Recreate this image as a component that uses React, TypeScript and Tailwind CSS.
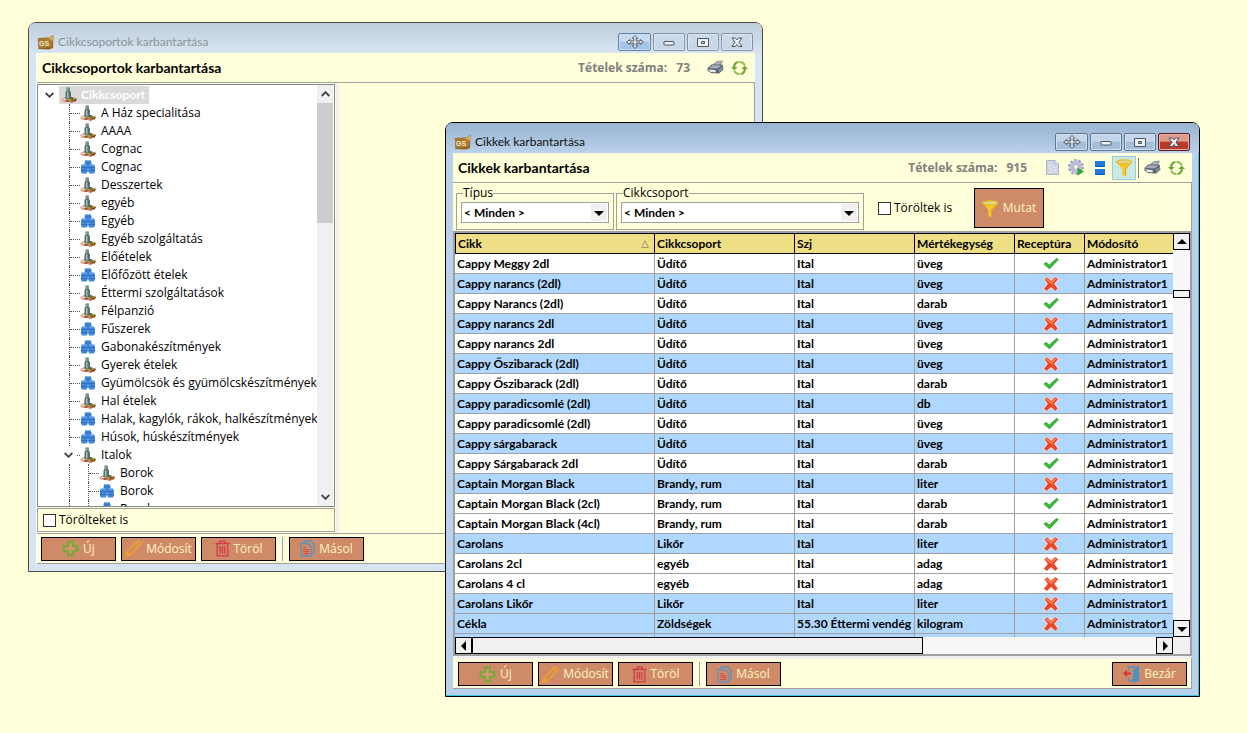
import React, { useState } from 'react'
import clsx from 'clsx'

type IconKind = "food" | "barrel"

interface ITreeItem {
  label: string;
  icon: IconKind;
  depth?: number;
  expanded?: boolean;
}

interface IArticle {
  name: string;
  group: string;
  szj?: string;
  unit: string;
  recipe: boolean;
  blue: boolean;
}

const treeItems: ITreeItem[] = [
  { label: "A Ház specialitása", icon: "food" },
  { label: "AAAA", icon: "food" },
  { label: "Cognac", icon: "food" },
  { label: "Cognac", icon: "barrel" },
  { label: "Desszertek", icon: "food" },
  { label: "egyéb", icon: "food" },
  { label: "Egyéb", icon: "barrel" },
  { label: "Egyéb szolgáltatás", icon: "food" },
  { label: "Előételek", icon: "food" },
  { label: "Előfőzött ételek", icon: "barrel" },
  { label: "Éttermi szolgáltatások", icon: "food" },
  { label: "Félpanzió", icon: "food" },
  { label: "Fűszerek", icon: "barrel" },
  { label: "Gabonakészítmények", icon: "barrel" },
  { label: "Gyerek ételek", icon: "food" },
  { label: "Gyümölcsök és gyümölcskészítmények", icon: "barrel" },
  { label: "Hal ételek", icon: "food" },
  { label: "Halak, kagylók, rákok, halkészítmények", icon: "barrel" },
  { label: "Húsok, húskészítmények", icon: "barrel" },
  { label: "Italok", icon: "food", expanded: true },
  { label: "Borok", icon: "food", depth: 2 },
  { label: "Borok", icon: "barrel", depth: 2 },
  { label: "Borok", icon: "barrel", depth: 2 },
]

const articles: IArticle[] = [
  { name: "Cappy Meggy 2dl", group: "Üdítő", unit: "üveg", recipe: true, blue: false },
  { name: "Cappy narancs (2dl)", group: "Üdítő", unit: "üveg", recipe: false, blue: true },
  { name: "Cappy Narancs (2dl)", group: "Üdítő", unit: "darab", recipe: true, blue: false },
  { name: "Cappy narancs 2dl", group: "Üdítő", unit: "üveg", recipe: false, blue: true },
  { name: "Cappy narancs 2dl", group: "Üdítő", unit: "üveg", recipe: true, blue: false },
  { name: "Cappy Őszibarack (2dl)", group: "Üdítő", unit: "üveg", recipe: false, blue: true },
  { name: "Cappy Őszibarack (2dl)", group: "Üdítő", unit: "darab", recipe: true, blue: false },
  { name: "Cappy paradicsomlé (2dl)", group: "Üdítő", unit: "db", recipe: false, blue: true },
  { name: "Cappy paradicsomlé (2dl)", group: "Üdítő", unit: "üveg", recipe: true, blue: false },
  { name: "Cappy sárgabarack", group: "Üdítő", unit: "üveg", recipe: false, blue: true },
  { name: "Cappy Sárgabarack 2dl", group: "Üdítő", unit: "darab", recipe: true, blue: false },
  { name: "Captain Morgan Black", group: "Brandy, rum", unit: "liter", recipe: false, blue: true },
  { name: "Captain Morgan Black (2cl)", group: "Brandy, rum", unit: "darab", recipe: true, blue: false },
  { name: "Captain Morgan Black (4cl)", group: "Brandy, rum", unit: "darab", recipe: true, blue: false },
  { name: "Carolans", group: "Likőr", unit: "liter", recipe: false, blue: true },
  { name: "Carolans 2cl", group: "egyéb", unit: "adag", recipe: false, blue: false },
  { name: "Carolans 4 cl", group: "egyéb", unit: "adag", recipe: false, blue: false },
  { name: "Carolans Likőr", group: "Likőr", unit: "liter", recipe: false, blue: true },
  { name: "Cékla", group: "Zöldségek", szj: "55.30 Éttermi vendég", unit: "kilogram", recipe: false, blue: true },
]

/* ---------- icons ---------- */

const AppIcon = () => (
  <svg width="17" height="15" viewBox="0 0 17 15" aria-hidden="true">
    <path d="M1 3 12 2.500 16.500 0 16 13 12 14.500 1.500 14Z" fill="#8b6224" />
    <path d="M0.500 3.500 12 3 16.500 0.300 15 12 2 13.200Z" fill="#a87a33" />
    <path d="M11 3.200 16.500 0.300 16 6Z" fill="#d9ae5e" />
    <text x="2" y="11" fontSize="7" fontWeight="700" fontFamily="Liberation Sans, sans-serif" fill="#f6e6c4">GS</text>
  </svg>
)

const FoodIcon = () => (
  <svg width="16" height="16" viewBox="0 0 16 16" className="shrink-0" aria-hidden="true">
    <path d="M0 12.500 4 10H10L16 12 14.500 14.500 10 16 7 14.800 2 14.800Z" fill="#cf9273" />
    <path d="M1 12.500 4.500 10.800 6 13 3 14Z" fill="#f2cfba" />
    <path d="M3.500 13.500 7 12.500 8.500 14.200 5.500 14.900Z" fill="#a84e38" />
    <path d="M9.500 9.800 16 12 14.500 14.500 11 13.500Z" fill="#70401c" />
    <path d="M11 10.700 15 12 13.500 13Z" fill="#eeb33a" />
    <path d="M8.500 12 12 12.600 11.500 14 8.500 13.600Z" fill="#55a827" />
    <path d="M9.500 14.300 13 14 11 15.700Z" fill="#c1472f" />
    <path d="M5.500 0.500h3.200v3l1.300 2V12H4.500V5.500l1-2Z" fill="#51706e" />
    <path d="M6 5h1.500v6.500H6z" fill="#a5c0ba" />
    <path d="M6.300 1h1v3h-1z" fill="#a9bfbd" />
  </svg>
)

const Barrel = ({ x, y }: { x: number; y: number }) => (
  <g transform={`translate(${x} ${y})`}>
    <path d="M0.800 0.500H5.700L6.700 2.500V7.500L5.700 9.500H0.800L0 7.500V2.500Z" fill="#4188da" />
    <path d="M1 0.500H5.500V1.500H1Z" fill="#7fb3ee" />
    <path d="M0 3.500H6.700M0 6.500H6.700" stroke="#2d67b8" strokeWidth="0.700" fill="none" />
  </g>
)

const BarrelIcon = () => (
  <svg width="16" height="16" viewBox="0 0 16 16" className="shrink-0" aria-hidden="true">
    <Barrel x={4.700} y={0.500} />
    <Barrel x={1} y={5} />
    <Barrel x={8.300} y={5} />
  </svg>
)

const PrinterIcon = () => (
  <svg width="17" height="15" viewBox="0 0 17 15" aria-hidden="true">
    <path d="M6 4.500 10 1.500 15.500 1 13 6Z" fill="#a9b1bd" stroke="#697080" strokeWidth="0.600" />
    <path d="M0.500 8 4.500 4.500 15.500 4.500 16.500 9.500 12 13.500 4 13 0.500 10.500Z" fill="#5c6370" />
    <path d="M1.500 8 5.500 5.300 14.500 5.500 10.500 8.500Z" fill="#a7aeb9" />
    <path d="M1 9.300 9 10.300 8.500 12.300 3.500 12Z" fill="#e4e8ee" />
    <path d="M11.500 9.500 15.500 7 15.800 9.300 12 12.300Z" fill="#8790a0" />
  </svg>
)

const RefreshIcon = () => (
  <svg width="17" height="16" viewBox="0 0 17 16" aria-hidden="true">
    <path d="M2 7C2.200 3.500 4.500 1.200 7.500 1V3C5.700 3.200 4.500 4.500 4.300 7H6.500L3.300 10.500 0 7Z" fill="#6fa83c" />
    <path d="M8.500 1C11.500 1 13.800 2.500 14.700 5L12.800 5.800C12 4 10.500 3 8.500 3Z" fill="#8cc152" />
    <path d="M15 9C14.800 12.500 12.500 14.800 9.500 15V13C11.300 12.800 12.500 11.500 12.700 9H10.500L13.700 5.500 17 9Z" fill="#6fa83c" />
    <path d="M8.500 15C5.500 15 3.200 13.500 2.300 11L4.200 10.200C5 12 6.500 13 8.500 13Z" fill="#8cc152" />
  </svg>
)

const DocIcon = () => (
  <svg width="13" height="15" viewBox="0 0 13 15" aria-hidden="true">
    <path d="M0.500 0.500H9L12.500 4V14.500H0.500Z" fill="#cfd6e1" stroke="#a9b4c6" />
    <path d="M9 0.500V4H12.500" fill="#f2f5f9" stroke="#a9b4c6" />
    <path d="M3 6h2M7 7h2M4 9h2M8 10h2M3 12h2" stroke="#f3f5f8" />
  </svg>
)

const GearIcon = () => (
  <svg width="17" height="17" viewBox="0 0 17 17" aria-hidden="true">
    <circle cx="8" cy="8" r="6.600" fill="none" stroke="#9b9cc0" strokeWidth="2.600" strokeDasharray="2.600 1.550" />
    <circle cx="8" cy="8" r="4.500" fill="none" stroke="#b9bbd9" strokeWidth="3.600" />
    <circle cx="8" cy="8" r="2.400" fill="#ffffe6" stroke="#8e90b6" strokeWidth="0.800" />
    <path d="M9.500 8.500 16 12.500 9.500 16.500Z" fill="#2fa62c" />
  </svg>
)

const BlocksIcon = () => (
  <svg width="10" height="14" viewBox="0 0 10 14" aria-hidden="true">
    <rect width="10" height="6" fill="#1e78e4" />
    <rect y="8" width="10" height="6" fill="#1e78e4" />
    <path d="M0 5.500h10M0 13.500h10" stroke="#0d55b5" />
  </svg>
)

const FunnelIcon = () => (
  <svg width="17" height="17" viewBox="0 0 17 17" className="shrink-0" aria-hidden="true">
    <path d="M0.800 3.500 6.500 10V16.500H10V10L15.800 3.500Z" fill="#f3c922" />
    <path d="M9 9.500V16.500H10V10L15 4.500Z" fill="#d9a815" />
    <ellipse cx="8.300" cy="2.800" rx="7.500" ry="2" fill="#dfd6a0" stroke="#e6bb1e" strokeWidth="1.200" />
  </svg>
)

const PlusIcon = () => (
  <svg width="17" height="17" viewBox="0 0 17 17" aria-hidden="true">
    <path d="M6 1.500H11V6H15.500V11H11V15.500H6V11H1.500V6H6Z" fill="#b98d5c" stroke="#79a83c" strokeWidth="2" strokeLinejoin="round" />
    <path d="M8.500 3.500v10M3.500 8.500h10" stroke="#d89a70" strokeWidth="2" />
  </svg>
)

const PencilIcon = () => (
  <svg width="17" height="17" viewBox="0 0 17 17" fill="none" stroke="#f9a51a" strokeWidth="1.200" strokeLinejoin="round" aria-hidden="true">
    <path d="M0.800 16.200 2 11.800 12.300 1.500Q13.500 0.500 15 2T15.500 4.700L5.200 15Z" />
    <path d="M2 11.800 5.200 15M11 2.800 14.200 6" />
  </svg>
)

const TrashIcon = () => (
  <svg width="15" height="17" viewBox="0 0 15 17" fill="none" stroke="#d23a49" strokeWidth="1.300" aria-hidden="true">
    <path d="M0.500 3.500H14.500M5 3.500V1.200H10V3.500M2.200 3.500V15.800H12.800V3.500M5.200 6V13.500M7.500 6V13.500M9.800 6V13.500" />
  </svg>
)

const CopyIcon = () => (
  <svg width="15" height="17" viewBox="0 0 15 17" fill="none" aria-hidden="true">
    <path d="M4 2.500V1H11L14 4V13.500H12" stroke="#5d93bd" strokeWidth="1.300" />
    <path d="M1 3.500H8L11.500 7V16H1Z" stroke="#5d93bd" strokeWidth="1.300" />
    <path d="M3.200 7.500h3M3.200 9.700h6M3.200 11.700h6M3.200 13.700h6" stroke="#d8453f" />
  </svg>
)

const DoorIcon = () => (
  <svg width="17" height="17" viewBox="0 0 17 17" aria-hidden="true">
    <path d="M5.500 4V1H15.500V14.500H10M5.500 11V14.500H10" fill="none" stroke="#4a92c7" strokeWidth="1.300" />
    <path d="M10 3.500 16 1V14.500L10 17Z" fill="#4a92c7" />
    <path d="M0 7.500 4 4V6.500H8V8.500H4V11Z" fill="#d8343f" />
  </svg>
)

const CheckMark = () => (
  <svg width="16" height="13" viewBox="0 0 16 13" className="mx-auto" role="img" aria-label="igen">
    <path d="M0.500 7 3 5 6.200 7.800 13.500 1 15.800 2.500 6.500 12.300Z" fill="#24a324" />
    <path d="M2 6.700 6.300 10 14 2.300" stroke="#4cc94a" strokeWidth="1.200" fill="none" />
  </svg>
)

const CrossMark = () => (
  <svg width="16" height="16" viewBox="0 0 16 16" className="mx-auto" role="img" aria-label="nem">
    <path d="M4 0.800 8 4.500 12 0.800 15.500 3 11.500 7.800 15 12.500 12.300 15.300 8 11.300 4 15.300 0.600 12.800 4.500 7.800 1.300 3.500Z" fill="#ef4527" stroke="#fbe3dc" strokeWidth="0.800" strokeLinejoin="round" />
    <path d="M3.500 3 8 7 12.500 2.800" stroke="#ff865e" strokeWidth="1.600" fill="none" />
  </svg>
)

const Chevron = ({ up }: { up?: boolean }) => (
  <svg width="9" height="6" viewBox="0 0 9 6" fill="none" stroke="#404040" strokeWidth="1.800" aria-hidden="true">
    <path d={up ? "M0.700 5 4.500 1.200 8.300 5" : "M0.700 1 4.500 4.800 8.300 1"} />
  </svg>
)

const Triangle = ({ dir }: { dir: "up" | "down" | "left" | "right" }) => {
  const paths = {
    up: "M0 7H10L5 2Z",
    down: "M0 3H10L5 8Z",
    left: "M7 0V10L2 5Z",
    right: "M3 0V10L8 5Z",
  }
  return (
    <svg width="10" height="10" viewBox="0 0 10 10" aria-hidden="true">
      <path d={paths[dir]} fill="#000" />
    </svg>
  )
}

/* ---------- window parts ---------- */

const captionIcons = [
  {
    label: "Mozgatás",
    icon: <path d="M9 0.500 11.700 3.300H10.200V6H14.200V4.500L17.300 7 14.200 9.500V8H10.200V10.700H11.700L9 13.500 6.300 10.700H7.800V8H3.800V9.500L0.700 7 3.800 4.500V6H7.800V3.300H6.300Z" />,
  },
  { label: "Kis méret", icon: <rect x="4" y="6.500" width="10" height="3.500" rx="0.500" /> },
  { label: "Teljes méret", icon: <path fillRule="evenodd" d="M3.500 3.500H14.500V11.500H3.500ZM7.500 6.500H10.500V8.500H7.500Z" /> },
  { label: "Bezárás", icon: <path d="M4 3H7.300L9 4.900 10.700 3H14L11 7.200 14 11.500H10.700L9 9.500 7.300 11.500H4L7 7.200Z" /> },
]

const TitleBar = ({ title, active }: { title: string; active?: boolean }) => (
  <div
    className={clsx(
      "flex h-[30px] shrink-0 items-center gap-1 rounded-t-md pt-2 pr-[9px] pl-2 text-[12px]",
      active ? "bg-linear-to-b from-[#99b4d1] to-[#b9d1ea] text-[#111]" : "bg-linear-to-b from-[#bfcddb] to-[#d7e4f2] text-[#8d939a]"
    )}
  >
    <AppIcon />
    <span className="grow font-['Lato','Open_Sans',sans-serif]">{title}</span>
    <div className="flex gap-[2px]">
      {captionIcons.map((item, i) => (
        <button
          key={item.label}
          type="button"
          aria-label={item.label}
          className={clsx(
            "flex h-[18px] items-center justify-center rounded-xs border inset-ring",
            i === 0 ? "w-[33px]" : "w-8",
            active && i === 3 && "border-[#5f1d1d] bg-linear-to-b from-[#dd9a8e] from-45% to-[#b83a2a] to-50% inset-ring-[#e5b0a6]",
            active && i !== 3 && "border-[#5f748f] bg-linear-to-b from-[#c3d5ea] from-45% to-[#a3bddb] to-50% inset-ring-[#d2e0f0]",
            !active && i === 0 && "border-[#6782a2] bg-linear-to-b from-[#c9dcf0] from-45% to-[#a5c4e4] to-50% inset-ring-[#c3def5]",
            !active && i !== 0 && "border-[#8494a8] bg-linear-to-b from-[#cddaea] to-[#c6d6e7] inset-ring-[#d8e4f0]"
          )}
        >
          <svg width="18" height="14" viewBox="0 0 18 14" fill="#f0f0f0" stroke="#4c5663" aria-hidden="true">{item.icon}</svg>
        </button>
      ))}
    </div>
  </div>
)

const ToolButton = ({ label, pressed, children }: { label: string; pressed?: boolean; children: React.ReactNode }) => (
  <button
    type="button"
    aria-label={label}
    className={clsx("flex h-6 w-6 items-center justify-center border", pressed ? "border-[#98cfe0] bg-[#cce8e0]" : "border-transparent")}
  >
    {children}
  </button>
)

const ActionButton = ({ icon, children, className }: { icon: React.ReactNode; children: string; className?: string }) => (
  <button
    type="button"
    className={clsx("flex items-center justify-center gap-1 border border-black bg-[#cf8a68] text-[12px] whitespace-nowrap text-[#fff4c4]", className ?? "h-6 w-[75px]")}
  >
    {icon}
    <span>{children}</span>
  </button>
)

const EditButtons = () => (
  <>
    <ActionButton icon={<PlusIcon />}>Új</ActionButton>
    <ActionButton icon={<PencilIcon />}>Módosít</ActionButton>
    <ActionButton icon={<TrashIcon />}>Töröl</ActionButton>
    <div className="ml-[1px] h-6 w-[2px] border-l border-[#a0a0a0] bg-white" />
    <ActionButton icon={<CopyIcon />}>Másol</ActionButton>
  </>
)

const HeaderRow = ({ title, count, children }: { title: string; count: number; children: React.ReactNode }) => (
  <div className="flex h-[30px] shrink-0 items-center border-b border-[#a0a0a0] pr-1 pl-[5px]">
    <h2 className="grow font-['Lato','Open_Sans',sans-serif] text-[14px] font-bold text-black">{title}</h2>
    <p className="mr-[13px] flex gap-[9px] text-[12px] font-bold text-[#808080]">
      <span>Tételek száma:</span>
      <span>{count}</span>
    </p>
    {children}
  </div>
)

const CheckBox = ({ label }: { label: string }) => {
  const [checked, setChecked] = useState(false)
  return (
    <label className="flex items-center gap-[3px] text-[12px] whitespace-nowrap text-black">
      <input
        type="checkbox"
        checked={checked}
        onChange={(e) => setChecked(e.target.checked)}
        className="size-[13px] appearance-none border border-[#333] bg-white checked:bg-[#555]"
      />
      {label}
    </label>
  )
}

const FilterSelect = ({ label, id, className }: { label: string; id: string; className: string }) => (
  <fieldset className={clsx("h-[43px] border border-[#a0a0a0] px-1", className)}>
    <legend className="ml-[2px] text-[12px] leading-3">
      <label htmlFor={id}>{label}</label>
    </legend>
    <div className="mt-[3px] grid items-center">
      <select id={id} className="col-start-1 row-start-1 h-[21px] w-full appearance-none border border-[#a0a0a0] bg-white px-[2px] font-['Lato','Open_Sans',sans-serif] text-[12px] font-bold">
        <option>&lt; Minden &gt;</option>
      </select>
      <span className="pointer-events-none col-start-1 row-start-1 mr-[2px] flex h-[17px] w-4 items-center justify-center justify-self-end bg-[#f0f0f0]">
        <Triangle dir="down" />
      </span>
    </div>
  </fieldset>
)

/* ---------- tree ---------- */

const TreeRow = ({ item }: { item: ITreeItem }) => (
  <li className="flex h-[18px] items-center">
    {item.expanded ? (
      <>
        <span className="ml-[26px] flex w-[13px] items-center"><Chevron /></span>
        <span className="w-[3px] border-t border-dotted border-[#555]" />
      </>
    ) : (
      <>
        <span className={clsx("ml-[31px] flex h-full items-center border-l border-dotted border-[#555]", item.depth === 2 ? "w-[19px]" : "w-[11px]")}>
          {item.depth !== 2 && <span className="w-[11px] border-t border-dotted border-[#555]" />}
        </span>
        {item.depth === 2 && (
          <span className="flex h-full w-[11px] items-center border-l border-dotted border-[#555]">
            <span className="w-[11px] border-t border-dotted border-[#555]" />
          </span>
        )}
      </>
    )}
    {item.icon === "food" ? <FoodIcon /> : <BarrelIcon />}
    <span className="ml-[5px] whitespace-nowrap">{item.label}</span>
  </li>
)

const GroupWindow = () => (
  <section className="absolute top-[22px] left-[28px] flex h-[550px] w-[735px] flex-col rounded-t-lg border border-[#4a4a4a] bg-[#d7e4f2]">
    <TitleBar title="Cikkcsoportok karbantartása" />
    <div className="mx-[7px] mb-[7px] flex min-h-0 flex-1 flex-col border-l border-l-white bg-[#ffffd9]">
      <HeaderRow title="Cikkcsoportok karbantartása" count={73}>
        <ToolButton label="Nyomtatás"><PrinterIcon /></ToolButton>
        <ToolButton label="Frissítés"><RefreshIcon /></ToolButton>
      </HeaderRow>
      <div className="flex min-h-0 flex-1 border-r border-b border-[#a0a0a0] pt-[1px]">
        <div className="flex w-[298px] flex-col">
          <div className="flex min-h-0 flex-1 border border-[#828790] bg-white">
            <ul className="min-w-0 grow overflow-hidden pt-[1px] text-[12px] text-black">
              <li className="flex h-[18px] items-center">
                <span className="ml-[7px] flex w-[14px] items-center"><Chevron /></span>
                <span className="flex h-[18px] items-center bg-[#d9d9d9] pr-1 pl-[2px]">
                  <FoodIcon />
                  <span className="ml-1 font-['Lato','Open_Sans',sans-serif] text-[12px] font-bold text-white">Cikkcsoport</span>
                </span>
              </li>
              {treeItems.map((item, i) => <TreeRow key={i} item={item} />)}
            </ul>
            <div className="mr-[1px] flex w-4 shrink-0 flex-col bg-[#f0f0f0]">
              <button type="button" aria-label="Fel" className="flex h-[18px] items-center justify-center"><Chevron up /></button>
              <div className="h-[120px] bg-[#cdcdcd]" />
              <button type="button" aria-label="Le" className="mt-auto flex h-[18px] items-center justify-center"><Chevron /></button>
            </div>
          </div>
          <div className="my-[1px] flex h-6 shrink-0 items-center border border-[#a0a0a0] pl-[5px]">
            <CheckBox label="Törölteket is" />
          </div>
        </div>
        <div className="ml-[1px] w-[3px] bg-[#f0f0f0]" />
      </div>
      <div className="flex h-[30px] shrink-0 items-center gap-[5px] border-b border-[#a0a0a0] pl-1">
        <EditButtons />
      </div>
    </div>
  </section>
)

/* ---------- article grid ---------- */

const scrollButton = "flex h-[17px] w-[17px] shrink-0 items-center justify-center border border-black bg-[#f0f0f0]"

const ArticleTable = () => {
  const cell = "h-5 overflow-hidden border-r border-b border-[#a0a0a0] py-0 pr-0 pl-[2px] leading-[19px]"
  return (
    <table className="w-[718px] table-fixed border-separate border-spacing-0 font-['Lato','Open_Sans',sans-serif] text-[12px] font-bold whitespace-nowrap text-black">
      <colgroup>
        <col className="w-[200px]" />
        <col className="w-[140px]" />
        <col className="w-[120px]" />
        <col className="w-[100px]" />
        <col className="w-[70px]" />
        <col />
      </colgroup>
      <thead>
        <tr className="bg-[#efdf84] text-left">
          <th className="h-[21px] border border-black py-0 pl-[2px]">
            <span className="flex items-center justify-between pr-[5px]">
              Cikk
              <svg width="8" height="8" viewBox="0 0 8 8" fill="none" stroke="#9a9680" aria-hidden="true"><path d="M0.700 7.500H7.300L4 0.700Z" /></svg>
            </span>
          </th>
          {["Cikkcsoport", "Szj", "Mértékegység", "Receptúra"].map((text) => (
            <th key={text} className="h-[21px] border-y border-r border-black py-0 pl-[2px]">{text}</th>
          ))}
          <th className="h-[21px] border-y border-black py-0 pl-[2px]">Módosító</th>
        </tr>
      </thead>
      <tbody>
        {articles.map((a, i) => (
          <tr key={i} className={a.blue ? "bg-[#b0d8ff]" : "bg-white"}>
            <td className={cell}>{a.name}</td>
            <td className={cell}>{a.group}</td>
            <td className={cell}>{a.szj ?? "Ital"}</td>
            <td className={cell}>{a.unit}</td>
            <td className={cell}>{a.recipe ? <CheckMark /> : <CrossMark />}</td>
            <td className="h-5 border-b border-[#a0a0a0] py-0 pr-0 pl-[2px] leading-[19px]">Administrator1</td>
          </tr>
        ))}
        <tr className="bg-[#b0d8ff]">
          {[0, 1, 2, 3, 4].map((i) => <td key={i} className={cell} />)}
          <td className="h-5" />
        </tr>
      </tbody>
    </table>
  )
}

const ArticleWindow = () => (
  <section className="absolute top-[122px] left-[445px] w-[755px] rounded-t-lg border border-black bg-[#b9d1ea] shadow-[inset_-1px_-1px_0_#35c5dd]">
    <TitleBar title="Cikkek karbantartása" active />
    <div className="mx-[7px] mb-[7px] bg-[#ffffd9]">
      <HeaderRow title="Cikkek karbantartása" count={915}>
        <ToolButton label="Új lap"><DocIcon /></ToolButton>
        <ToolButton label="Beállítások"><GearIcon /></ToolButton>
        <ToolButton label="Nézet"><BlocksIcon /></ToolButton>
        <ToolButton label="Szűrő" pressed><FunnelIcon /></ToolButton>
        <div className="mr-[1px] ml-[2px] h-5 w-px bg-[#808080]" />
        <ToolButton label="Nyomtatás"><PrinterIcon /></ToolButton>
        <ToolButton label="Frissítés"><RefreshIcon /></ToolButton>
      </HeaderRow>
      <div className="flex h-12 items-start gap-[2px] border-r border-[#a0a0a0] pt-1 pl-[3px]">
        <FilterSelect id="tipus" label="Típus" className="w-[158px]" />
        <FilterSelect id="csoport" label="Cikkcsoport" className="w-[248px]" />
        <div className="ml-3 flex h-[42px] w-[94px] items-center">
          <CheckBox label="Töröltek is" />
        </div>
        <ActionButton icon={<FunnelIcon />} className="mt-[1px] h-10 w-[70px]">Mutat</ActionButton>
      </div>
      <div className="border-2 border-[#a0a0a0]">
        <div className="flex">
          <div className="h-[404px] min-w-0 grow overflow-hidden">
            <ArticleTable />
          </div>
          <div className="flex w-[17px] shrink-0 flex-col bg-[#f7f7f7]">
            <button type="button" aria-label="Fel" className={scrollButton}><Triangle dir="up" /></button>
            <div className="mt-10 h-2 border border-black bg-[#f0f0f0]" />
            <button type="button" aria-label="Le" className={clsx(scrollButton, "mt-auto")}><Triangle dir="down" /></button>
          </div>
        </div>
        <div className="flex bg-[#f0f0f0]">
          <div className="flex grow bg-[#f7f7f7]">
            <button type="button" aria-label="Balra" className={scrollButton}><Triangle dir="left" /></button>
            <div className="w-[451px] border border-black bg-[#f0f0f0]" />
            <button type="button" aria-label="Jobbra" className={clsx(scrollButton, "ml-auto")}><Triangle dir="right" /></button>
          </div>
          <div className="w-[17px]" />
        </div>
      </div>
      <div className="flex items-center gap-[5px] border-t-[3px] border-r border-b border-t-[#f0f0f0] border-r-[#a0a0a0] border-b-[#a0a0a0] pt-[3px] pr-1 pb-[2px] pl-[5px]">
        <EditButtons />
        <div className="ml-auto">
          <ActionButton icon={<DoorIcon />}>Bezár</ActionButton>
        </div>
      </div>
    </div>
  </section>
)

const App = () => {
  return (
    <main className="relative min-h-screen overflow-hidden bg-[#ffffd9] font-['Open_Sans',sans-serif]">
      <GroupWindow />
      <ArticleWindow />
    </main>
  )
}

export default App
